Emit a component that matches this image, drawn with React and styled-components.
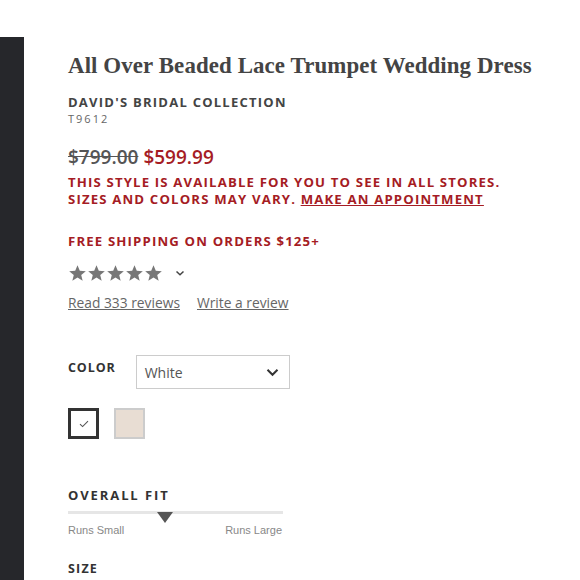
import React from "react";
import styled, { createGlobalStyle } from "styled-components";

const Global = createGlobalStyle`
  html, body { margin: 0; padding: 0; background: #fff; }
  body { font-family: "Open Sans", sans-serif; color: #444; overflow: hidden; }
`;

const Page = styled.div`
  display: flex;
  width: 580px;
  height: 580px;
  padding-top: 37px;
  box-sizing: border-box;
`;

const Side = styled.div`
  width: 24px;
  background: #26272b;
  flex-shrink: 0;
`;

const Main = styled.div`
  padding-left: 44px;
  display: flex;
  flex-direction: column;
`;

const Title = styled.h1`
  margin: 14px 0 0;
  font-family: "Liberation Serif", serif;
  font-weight: 700;
  font-size: 22.9px;
  line-height: 30px;
  color: #444;
  letter-spacing: 0.1px;
`;

const Brand = styled.div`
  margin-top: 12px;
  font-size: 13px;
  font-weight: 700;
  letter-spacing: 1.25px;
  line-height: 18px;
  color: #444;
`;

const Sku = styled.div`
  font-size: 11px;
  letter-spacing: 2px;
  line-height: 16px;
  color: #666;
`;

const Prices = styled.div`
  margin-top: 18px;
  display: flex;
  gap: 5px;
  font-size: 19px;
  font-weight: 600;
  line-height: 24px;
`;

const Price = styled.span`
  color: ${(p) => (p.$old ? "#555" : "#a51c24")};
  text-decoration: ${(p) => (p.$old ? "line-through" : "none")};
`;

const Notice = styled.div`
  margin-top: 5px;
  font-size: 13.2px;
  font-weight: 700;
  letter-spacing: 1.15px;
  line-height: 17px;
  color: #a51c24;
  a { color: inherit; text-decoration: underline; }
`;

const Shipping = styled(Notice)`
  margin-top: 25px;
`;

const Rating = styled.div`
  margin-top: 11px;
  display: flex;
  align-items: center;
  gap: 0;
  height: 24px;
`;

const Star = styled.svg`
  width: 19px;
  height: 19px;
  fill: #777;
`;

const Chevron = styled.svg`
  margin-left: 12px;
  width: 10px;
  height: 10px;
`;

const Links = styled.div`
  margin-top: 9px;
  display: flex;
  gap: 17px;
  font-size: 13.8px;
  line-height: 18px;
  a { color: #666; text-decoration: underline; }
`;

const ColorRow = styled.div`
  margin-top: 43px;
  display: flex;
  align-items: flex-start;
  gap: 20px;
`;

const Label = styled.div`
  font-size: 12.5px;
  font-weight: 700;
  letter-spacing: 1.2px;
  color: #333;
  line-height: 18px;
`;

const ColorLabel = styled(Label)`
  margin-top: 4px;
  letter-spacing: 0.9px;
`;

const Select = styled.div`
  width: 154px;
  height: 34px;
  box-sizing: border-box;
  border: 1px solid #ccc;
  display: flex;
  align-items: center;
  justify-content: space-between;
  padding: 0 10px 0 8px;
  font-size: 14px;
  color: #555;
`;

const Swatches = styled.div`
  margin-top: 19px;
  display: flex;
  gap: 15px;
`;

const Swatch = styled.div`
  width: 31px;
  height: 31px;
  box-sizing: border-box;
  background: ${(p) => p.$color};
  border: ${(p) => (p.$active ? "3px solid #333" : "2px solid #ccc")};
  display: flex;
  align-items: center;
  justify-content: center;
`;

const FitLabel = styled(Label)`
  margin-top: 47px;
  font-size: 13px;
  letter-spacing: 1.9px;
`;

const Track = styled.div`
  position: relative;
  margin-top: 7px;
  width: 215px;
  height: 3px;
  background: #e6e6e6;
`;

const Marker = styled.div`
  position: absolute;
  left: 89px;
  top: 1px;
  width: 0;
  height: 0;
  border-left: 8px solid transparent;
  border-right: 8px solid transparent;
  border-top: 11px solid #555;
`;

const Ends = styled.div`
  margin-top: 9px;
  width: 214px;
  display: flex;
  justify-content: space-between;
  font-family: "Liberation Sans", Arial, sans-serif;
  font-size: 11px;
  color: #888;
  line-height: 14px;
`;

const SizeLabel = styled(Label)`
  margin-top: 23px;
`;

const starPath =
  "M12 1.5l2.9 7 7.6.5-5.8 4.8 1.8 7.4L12 17.2l-6.5 4 1.8-7.4L1.5 9l7.6-.5z";

export default function App() {
  return (
    <>
      <Global />
      <Page>
        <Side />
        <Main>
          <Title>All Over Beaded Lace Trumpet Wedding Dress</Title>
          <Brand>DAVID'S BRIDAL COLLECTION</Brand>
          <Sku>T9612</Sku>
          <Prices>
            <Price $old>$799.00</Price>
            <Price>$599.99</Price>
          </Prices>
          <Notice>
            THIS STYLE IS AVAILABLE FOR YOU TO SEE IN ALL STORES.
            <br />
            SIZES AND COLORS MAY VARY. <a href="#">MAKE AN APPOINTMENT</a>
          </Notice>
          <Shipping>FREE SHIPPING ON ORDERS $125+</Shipping>
          <Rating>
            {[0, 1, 2, 3, 4].map((i) => (
              <Star key={i} viewBox="0 0 24 24">
                <path d={starPath} />
              </Star>
            ))}
            <Chevron viewBox="0 0 10 10">
              <path d="M1.5 3.5L5 6.8l3.5-3.3" fill="none" stroke="#444" strokeWidth="1.5" />
            </Chevron>
          </Rating>
          <Links>
            <a href="#">Read 333 reviews</a>
            <a href="#">Write a review</a>
          </Links>
          <ColorRow>
            <ColorLabel>COLOR</ColorLabel>
            <Select>
              <span>White</span>
              <svg width="13" height="9" viewBox="0 0 13 9">
                <path d="M1.5 1.8l5 5 5-5" fill="none" stroke="#333" strokeWidth="2" />
              </svg>
            </Select>
          </ColorRow>
          <Swatches>
            <Swatch $active $color="#fff">
              <svg width="10" height="8" viewBox="0 0 10 8">
                <path d="M1 4.2l2.6 2.4L9 1.2" fill="none" stroke="#555" strokeWidth="1.1" />
              </svg>
            </Swatch>
            <Swatch $color="#e8ddd3" />
          </Swatches>
          <FitLabel>OVERALL FIT</FitLabel>
          <Track>
            <Marker />
          </Track>
          <Ends>
            <span>Runs Small</span>
            <span>Runs Large</span>
          </Ends>
          <SizeLabel>SIZE</SizeLabel>
        </Main>
      </Page>
    </>
  );
}
